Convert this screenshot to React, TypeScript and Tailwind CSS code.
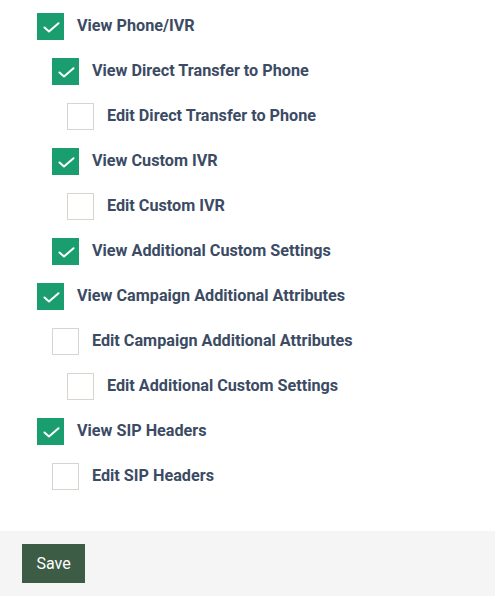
import React from "react";

type Item = { label: string; level: number; checked: boolean };

const items: Item[] = [
  { label: "View Phone/IVR", level: 0, checked: true },
  { label: "View Direct Transfer to Phone", level: 1, checked: true },
  { label: "Edit Direct Transfer to Phone", level: 2, checked: false },
  { label: "View Custom IVR", level: 1, checked: true },
  { label: "Edit Custom IVR", level: 2, checked: false },
  { label: "View Additional Custom Settings", level: 1, checked: true },
  { label: "View Campaign Additional Attributes", level: 0, checked: true },
  { label: "Edit Campaign Additional Attributes", level: 1, checked: false },
  { label: "Edit Additional Custom Settings", level: 2, checked: false },
  { label: "View SIP Headers", level: 0, checked: true },
  { label: "Edit SIP Headers", level: 1, checked: false },
];

const indent = ["pl-0", "pl-[15px]", "pl-[30px]"];

function Box({ checked }: { checked: boolean }) {
  if (checked) {
    return (
      <div className="w-[27px] h-[27px] bg-[#1a9e6f] flex items-center justify-center shrink-0">
        <svg width="17" height="11" viewBox="0 0 17 11" fill="none" className="mt-[2px] ml-[1px]">
          <path d="M1.5 5.5 L6 9.5 L15.5 1.2" stroke="white" strokeWidth="2" strokeLinecap="round" strokeLinejoin="round" />
        </svg>
      </div>
    );
  }
  return <div className="w-[27px] h-[27px] border border-[#d9d4cd] bg-white shrink-0" />;
}

export default function App() {
  return (
    <div className="w-[495px] h-[609px] bg-white flex flex-col" style={{ fontFamily: "Roboto, 'Liberation Sans', sans-serif" }}>
      <div className="pl-[37px] pt-[13px] flex flex-col gap-[18px] h-[531px]">
        {items.map((it, i) => (
          <div key={i} className={`flex items-center gap-[13px] ${indent[it.level]}`}>
            <Box checked={it.checked} />
            <span className="text-[16.2px] font-bold text-[#3c4b64] leading-none -mt-[1px]">{it.label}</span>
          </div>
        ))}
      </div>
      <div className="bg-[#f5f5f5] h-[65px] pl-[22px] pt-[13px]">
        <button className="w-[63px] h-[39px] bg-[#3d5c45] text-white text-[16px]">Save</button>
      </div>
    </div>
  );
}
